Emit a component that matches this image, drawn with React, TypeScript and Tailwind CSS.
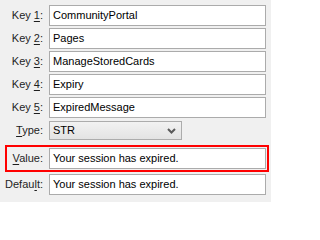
import { ReactNode } from "react";

const keys = [
  { n: "1", v: "CommunityPortal" },
  { n: "2", v: "Pages" },
  { n: "3", v: "ManageStoredCards" },
  { n: "4", v: "Expiry" },
  { n: "5", v: "ExpiredMessage" },
];

const Label = ({ children }: { children: ReactNode }) => (
  <div className="w-[44px] shrink-0 pr-[1px] text-right text-[#1e1e1e]">{children}</div>
);

const Box = ({ children }: { children: ReactNode }) => (
  <div className="ml-[5px] flex h-[21px] w-[217px] items-center border border-[#ababab] bg-white pl-[3px] text-black">
    {children}
  </div>
);

export default function App() {
  return (
    <div
      className="h-[202px] w-[271px] bg-[#f0f0f0] pt-[5px] text-[11px] leading-none"
      style={{ fontFamily: '"Liberation Sans", Arial, sans-serif' }}
    >
      {keys.map((k) => (
        <div key={k.n} className="mb-[2px] flex items-center">
          <Label>
            Key <span className="underline underline-offset-2">{k.n}</span>:
          </Label>
          <Box>{k.v}</Box>
        </div>
      ))}

      <div className="mt-[3px] flex items-center">
        <Label>
          <span className="underline underline-offset-2">T</span>ype:
        </Label>
        <div className="ml-[5px] flex h-[19px] w-[133px] items-center justify-between border border-[#acacac] bg-gradient-to-b from-[#f2f2f2] to-[#e3e3e3] pl-[3px] pr-[5px] text-black">
          <span>STR</span>
          <svg width="9" height="6" viewBox="0 0 9 6" className="mt-[1px]">
            <path d="M1 1 L4.5 4.5 L8 1" fill="none" stroke="#5a5a5a" strokeWidth="2" />
          </svg>
        </div>
      </div>

      <div className="ml-[5px] mt-[5px] flex h-[27px] w-[264px] items-center border-2 border-[#ff0000]">
        <div className="w-[37px] shrink-0 pr-[1px] text-right text-[#1e1e1e]">
          <span className="underline underline-offset-2">V</span>alue:
        </div>
        <Box>Your session has expired.</Box>
      </div>

      <div className="mt-[2px] flex items-center">
        <Label>
          Defau<span className="underline underline-offset-2">l</span>t:
        </Label>
        <Box>Your session has expired.</Box>
      </div>
    </div>
  );
}
